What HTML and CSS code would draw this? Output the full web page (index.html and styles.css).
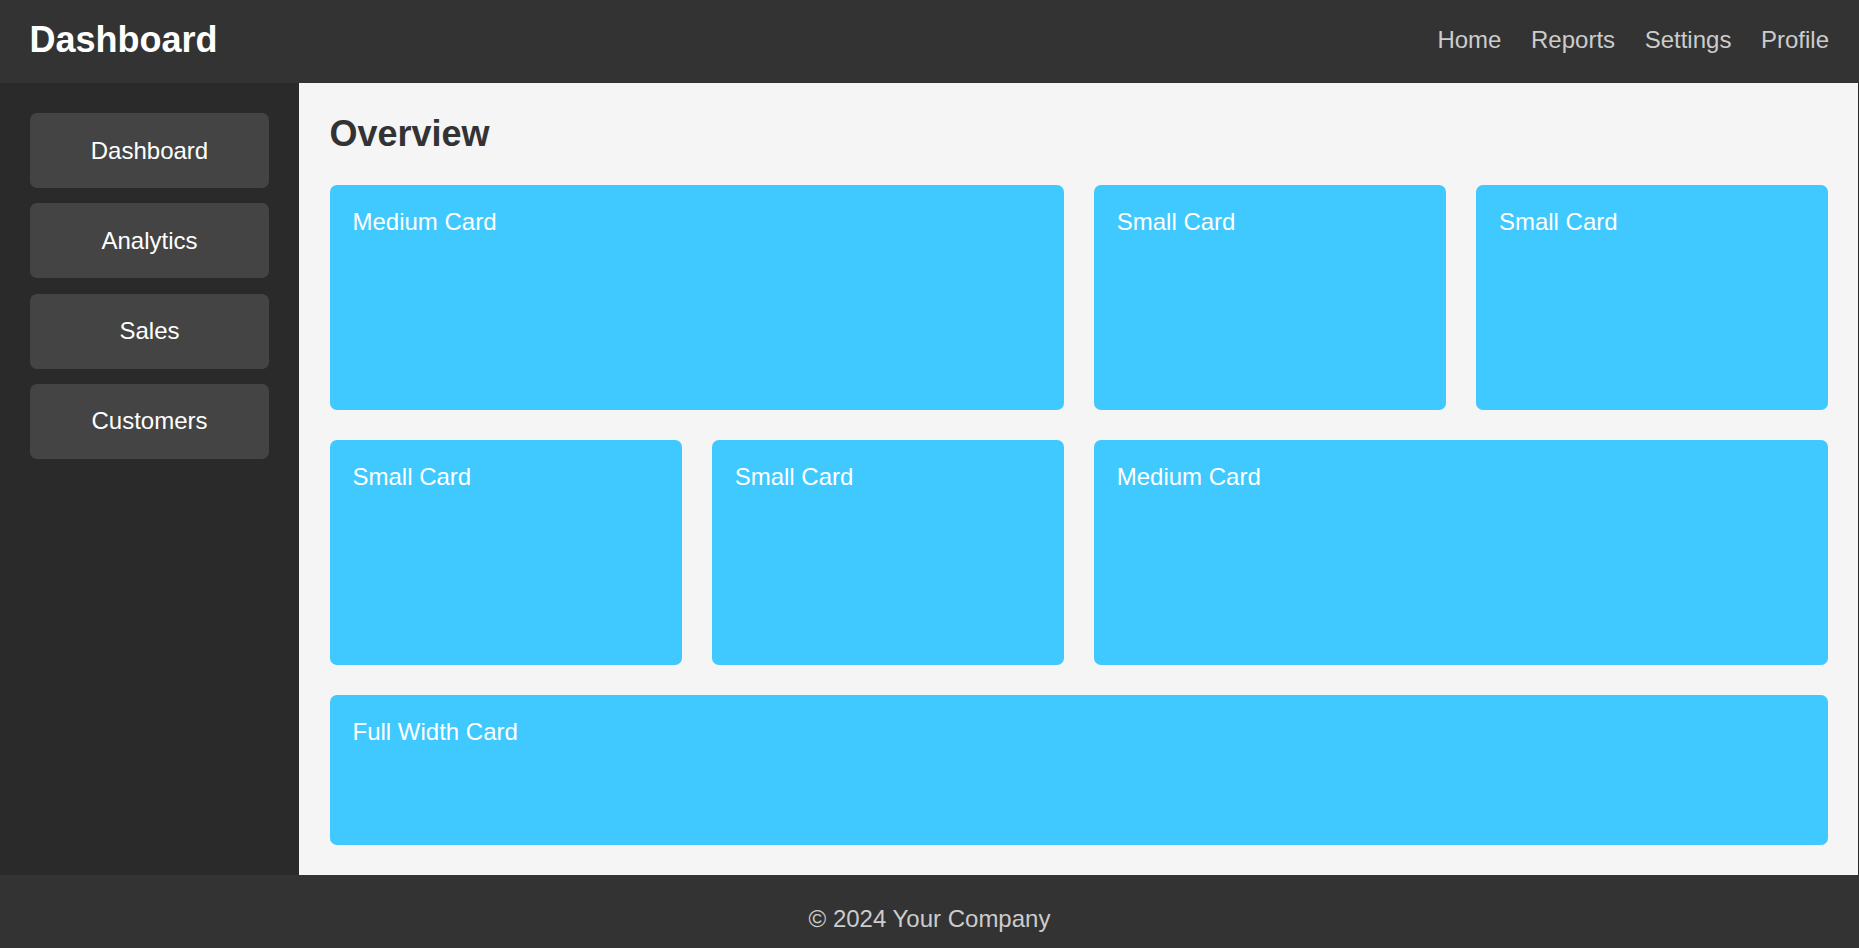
FILE: index.html
```html
<!DOCTYPE html>
<html lang="en">
<head>
<meta charset="utf-8">
<title>Dashboard</title>
<link rel="stylesheet" href="styles.css">
</head>
<body>
<header class="topbar">
  <h1 class="brand">Dashboard</h1>
  <nav class="topnav">
    <a href="#">Home</a>
    <a href="#">Reports</a>
    <a href="#">Settings</a>
    <a href="#">Profile</a>
  </nav>
</header>
<div class="layout">
  <aside class="sidebar">
    <a class="side-btn" href="#">Dashboard</a>
    <a class="side-btn" href="#">Analytics</a>
    <a class="side-btn" href="#">Sales</a>
    <a class="side-btn" href="#">Customers</a>
  </aside>
  <main class="content">
    <h2 class="page-title">Overview</h2>
    <div class="grid">
      <div class="card span-2 tall">Medium Card</div>
      <div class="card tall">Small Card</div>
      <div class="card tall">Small Card</div>
      <div class="card tall">Small Card</div>
      <div class="card tall">Small Card</div>
      <div class="card span-2 tall">Medium Card</div>
      <div class="card span-4 short">Full Width Card</div>
    </div>
  </main>
</div>
<footer class="footer">© 2024 Your Company</footer>
</body>
</html>
```

FILE: styles.css
```css
* { box-sizing: border-box; }
html, body { margin: 0; padding: 0; }
body {
  font-family: "Liberation Sans", Arial, sans-serif;
  background: #2a2a2a;
  overflow: hidden;
}
.topbar {
  height: 83px;
  background: #333333;
  display: flex;
  align-items: center;
  justify-content: space-between;
  padding: 0 30px 3px 29.5px;
}
.brand {
  margin: 0;
  font-size: 36px;
  font-weight: bold;
  color: #ffffff;
}
.topnav { display: flex; gap: 29.6px; }
.topnav a {
  color: #cccccc;
  text-decoration: none;
  font-size: 24px;
}
.layout {
  display: grid;
  grid-template-columns: 299px 1fr;
  height: 792px;
}
.sidebar {
  background: #2a2a2a;
  padding: 30px 29.6px;
  display: flex;
  flex-direction: column;
  gap: 15.2px;
}
.side-btn {
  display: block;
  background: #444444;
  color: #ffffff;
  text-decoration: none;
  text-align: center;
  font-size: 24px;
  padding: 23.7px 10px 23.4px;
  border-radius: 7px;
}
.content {
  background: #f5f5f5;
  padding: 30px 30px 30px 30.5px;
  margin-right: 1px;
}
.page-title {
  margin: 0 0 30.5px;
  font-size: 36px;
  line-height: 41px;
  font-weight: bold;
  color: #333333;
}
.grid {
  display: grid;
  grid-template-columns: repeat(4, 1fr);
  gap: 30px;
}
.card {
  background: #3fc9ff;
  color: #ffffff;
  border-radius: 7px;
  padding: 23.5px 23px;
  font-size: 24px;
}
.span-2 { grid-column: span 2; }
.span-4 { grid-column: span 4; }
.tall { height: 225px; }
.short { height: 150px; }
.footer {
  height: 73px;
  background: #333333;
  color: #cccccc;
  text-align: center;
  font-size: 24px;
  padding-top: 30.3px;
}
```
